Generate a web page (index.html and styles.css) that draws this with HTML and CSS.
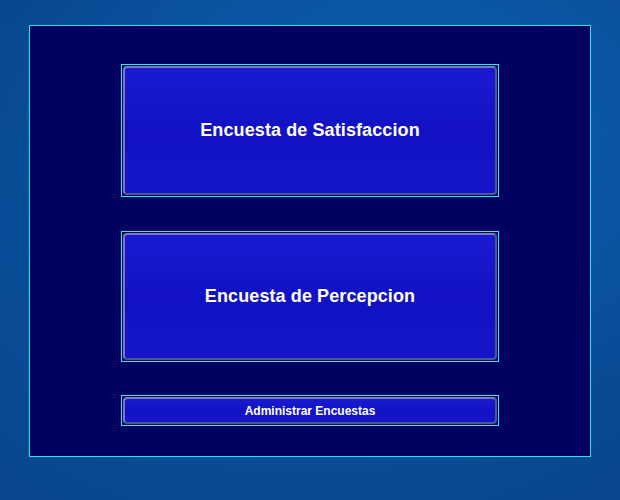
FILE: index.html
```html
<!DOCTYPE html>
<html>
<head>
<meta charset="utf-8">
<link rel="stylesheet" href="styles.css">
</head>
<body>
<div class="panel">
  <div class="frame big"><button class="btn">Encuesta de Satisfaccion</button></div>
  <div class="frame big second"><button class="btn">Encuesta de Percepcion</button></div>
  <div class="frame small"><button class="btn">Administrar Encuestas</button></div>
</div>
</body>
</html>
```
FILE: styles.css
```css
html, body {
  margin: 0;
  padding: 0;
}
body {
  width: 620px;
  height: 500px;
  overflow: hidden;
  background:
    radial-gradient(ellipse 420px 300px at 420px 120px, #0c5eae 0%, rgba(12,94,174,0) 100%),
    radial-gradient(ellipse 700px 500px at 310px 230px, #0a54a2 0%, #08468e 70%, #063a7c 100%);
  padding-top: 25px;
  box-sizing: border-box;
}
.panel {
  margin-left: 29px;
  width: 562px;
  height: 432px;
  box-sizing: border-box;
  border: 1px solid #22e6e6;
  background: #000060;
  padding-top: 38px;
  display: flex;
  flex-direction: column;
  align-items: center;
}
.frame {
  width: 378px;
  box-sizing: border-box;
  border: 1px solid #22eeee;
  padding: 1px;
  display: flex;
}
.big {
  height: 133px;
}
.second {
  height: 131px;
  margin-top: 34px;
}
.small {
  height: 31px;
  margin-top: 33px;
}
.btn {
  flex: 1;
  margin: 0;
  border: 2px solid;
  border-color: #7a7ab8 #545488 #545488 #7a7ab8;
  border-radius: 4px;
  background: linear-gradient(#1a1ad2, #1212c4 50%, #1414ca);
  color: #ffffff;
  font-family: "Liberation Sans", Arial, sans-serif;
  font-weight: bold;
  font-size: 18px;
  letter-spacing: 0.1px;
  padding: 0;
}
.small .btn {
  font-size: 12px;
  letter-spacing: 0;
}
```
